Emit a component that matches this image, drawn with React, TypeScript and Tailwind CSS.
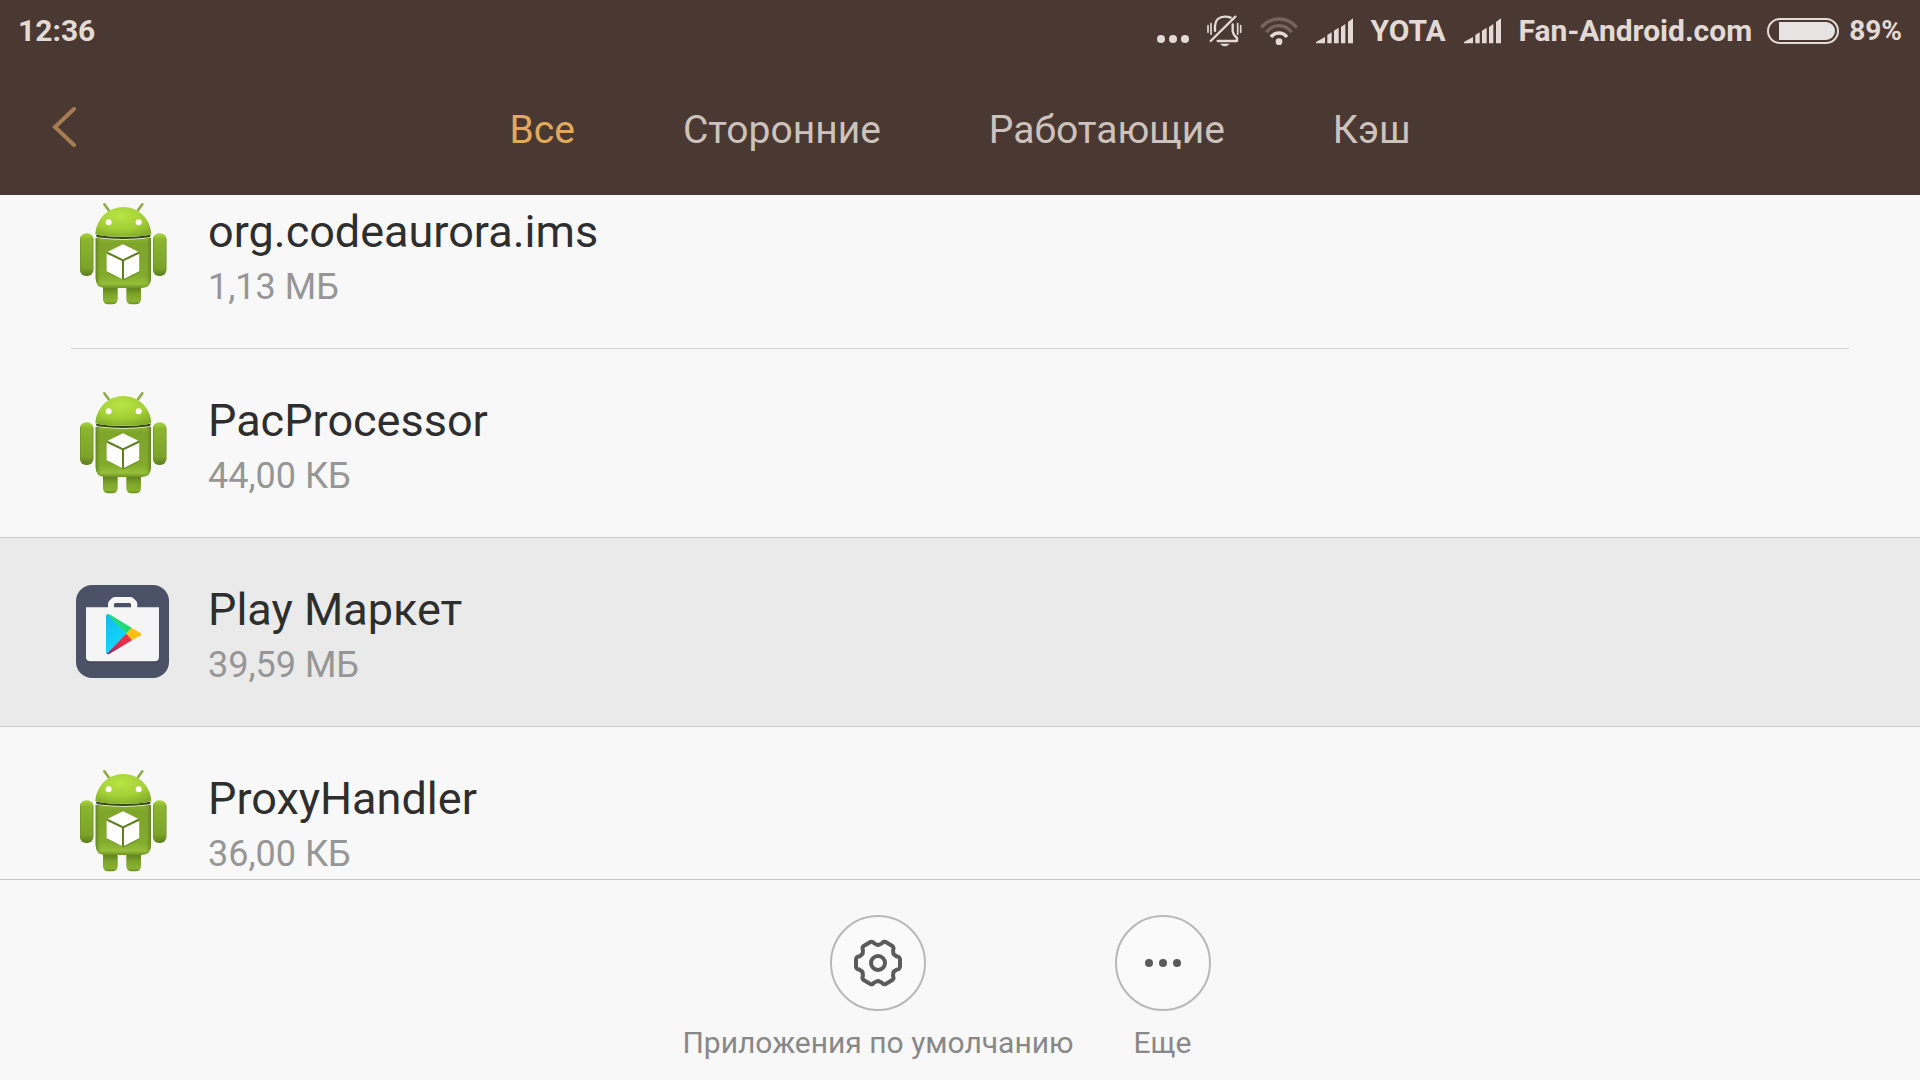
import { useState } from 'react'
import type { ReactNode } from 'react'

interface AppEntry {
  name: string
  size: string
  icon: 'robot' | 'play'
}

const apps: AppEntry[] = [
  { name: 'org.codeaurora.ims', size: '1,13 МБ', icon: 'robot' },
  { name: 'PacProcessor', size: '44,00 КБ', icon: 'robot' },
  { name: 'Play Маркет', size: '39,59 МБ', icon: 'play' },
  { name: 'ProxyHandler', size: '36,00 КБ', icon: 'robot' },
]

const tabs = ['Все', 'Сторонние', 'Работающие', 'Кэш']

// six rounded lobes, one every 60 degrees
function gearPath() {
  const at = (deg: number, r: number) => {
    const a = (deg * Math.PI) / 180
    return `${(r * Math.cos(a)).toFixed(2)} ${(r * Math.sin(a)).toFixed(2)}`
  }
  let d = `M${at(-16, 65)}`
  for (let k = 0; k < 360; k += 60) {
    d += `Q${at(k - 13, 67)} ${at(k - 10, 67)}`
    d += `Q${at(k, 66)} ${at(k + 10, 67)}`
    d += `Q${at(k + 14, 67)} ${at(k + 17, 64)}`
    d += `Q${at(k + 19, 58)} ${at(k + 25, 56)}`
    d += `Q${at(k + 30, 52)} ${at(k + 35, 56)}`
    d += `Q${at(k + 41, 58)} ${at(k + 44, 65)}`
  }
  return d + 'Z'
}

function RobotIcon() {
  return (
    <svg width="88" height="104" viewBox="57 63 264 312" aria-hidden="true">
      <defs>
        <radialGradient id="head" cx="0.45" cy="0.3" r="0.75">
          <stop offset="0" stopColor="#b9e444" />
          <stop offset="0.6" stopColor="#a3cf36" />
          <stop offset="1" stopColor="#83ac2b" />
        </radialGradient>
        <linearGradient id="body" x1="0" y1="0" x2="0" y2="1">
          <stop offset="0" stopColor="#8db52f" />
          <stop offset="0.12" stopColor="#7ea42a" />
          <stop offset="0.75" stopColor="#83ab2b" />
          <stop offset="0.92" stopColor="#96bf3a" />
          <stop offset="1" stopColor="#6d9024" />
        </linearGradient>
        <linearGradient id="side" x1="0" y1="0" x2="1" y2="0">
          <stop offset="0" stopColor="#55761a" stopOpacity="0.75" />
          <stop offset="0.12" stopColor="#8fb832" stopOpacity="0" />
          <stop offset="0.88" stopColor="#8fb832" stopOpacity="0" />
          <stop offset="1" stopColor="#55761a" stopOpacity="0.75" />
        </linearGradient>
        <linearGradient id="arm" x1="0" y1="0" x2="0" y2="1">
          <stop offset="0" stopColor="#a9d53d" />
          <stop offset="0.15" stopColor="#8bb52f" />
          <stop offset="0.8" stopColor="#7da32a" />
          <stop offset="1" stopColor="#5c7d1d" />
        </linearGradient>
        <linearGradient id="leg" x1="0" y1="0" x2="0" y2="1">
          <stop offset="0" stopColor="#55761a" />
          <stop offset="0.5" stopColor="#7da52a" />
          <stop offset="0.85" stopColor="#89b132" />
          <stop offset="1" stopColor="#64861f" />
        </linearGradient>
      </defs>
      <path d="M133 70l13 18M247 70l-13 18" stroke="#8fac4a" strokeWidth="8" strokeLinecap="round" />
      <path d="M129 312h44v42q0 16-17 16h-10q-17 0-17-16zM199 312h44v42q0 16-17 16h-10q-17 0-17-16z" fill="url(#leg)" />
      <rect x="60" y="157" width="40" height="128" rx="18" fill="url(#arm)" />
      <rect x="60" y="157" width="40" height="128" rx="18" fill="url(#side)" />
      <rect x="279" y="157" width="40" height="128" rx="18" fill="url(#arm)" />
      <rect x="279" y="157" width="40" height="128" rx="18" fill="url(#side)" />
      <path d="M107 170q83 12 166 0v122q0 29-29 29H136q-29 0-29-29z" fill="url(#body)" />
      <path d="M107 170q83 12 166 0v122q0 29-29 29H136q-29 0-29-29z" fill="url(#side)" />
      <path d="M107 161q83 14 166 0l-4 8q-79 10-158 0z" fill="#33470f" />
      <path d="M106 158c4-46 39-80 84-80s80 34 84 80q-10 9-84 9t-84-9z" fill="url(#head)" />
      <circle cx="146" cy="124" r="9" fill="#fff" />
      <circle cx="236" cy="124" r="9" fill="#fff" />
      <path d="M190 194l49 22v57l-48 25-49-25v-57z" fill="#4d6a17" opacity="0.65" />
      <path d="M189 190l46 22-46 23-46-23z" fill="#fff" />
      <path d="M140 218l46 22v54l-46-23zM238 218l-46 22v54l46-23z" fill="#fff" />
    </svg>
  )
}

function PlayIcon() {
  return (
    <svg width="94" height="94" viewBox="48 74 282 282" aria-hidden="true">
      <defs>
        <linearGradient id="blue" x1="0" y1="0" x2="0.4" y2="1">
          <stop offset="0" stopColor="#15b9e6" />
          <stop offset="1" stopColor="#0fdcff" />
        </linearGradient>
        <linearGradient id="red" x1="1" y1="0" x2="0" y2="1">
          <stop offset="0" stopColor="#f5334a" />
          <stop offset="0.5" stopColor="#de2f4a" />
          <stop offset="1" stopColor="#8d2a72" />
        </linearGradient>
      </defs>
      <rect x="48" y="74" width="279" height="279" rx="48" fill="#4b5267" />
      <path d="M78 150h220v145q0 13-13 13H91q-13 0-13-13z" fill="#3a4053" opacity="0.6" />
      <path
        fillRule="evenodd"
        d="M78 141h66v-10q0-6 4-10l6-6q4-5 10-5h48q6 0 10 5l6 6q4 4 4 10v10h65v149q0 13-13 13H91q-13 0-13-13zM162 141h51v-9l-3-4h-45l-3 4z"
        fill="#f5f5f6"
      />
      <path d="M138 167q0-6 6-5l56 58-56 61q-6 2-6-5z" fill="url(#blue)" />
      <path d="M142 162q3-2 6 0l67 40-16 18z" fill="#1fdc78" />
      <path d="M214 202l27 15q6 4 0 9l-26 14-17-20z" fill="#fdbf13" />
      <path d="M199 220l17 20-68 41q-4 2-7-1z" fill="url(#red)" />
    </svg>
  )
}

function SignalIcon() {
  return (
    <svg width="37" height="26" viewBox="0 0 111 78" fill="#e3dad6" aria-hidden="true">
      <path d="M0 76v-4l27-15v19zM34 76V51l13-8v33zM54 76V38l14-9v47zM75 76V27l13-9v58zM96 76V12l15-11v75z" />
    </svg>
  )
}

function MutedBellIcon() {
  return (
    <svg
      width="35"
      height="32"
      viewBox="0 0 105 96"
      fill="none"
      stroke="#e3dad6"
      strokeWidth="7"
      strokeLinecap="round"
      strokeLinejoin="round"
      aria-hidden="true"
    >
      <path d="M71 8Q64 5 54 5C36 5 25 16 24 32v16" />
      <path d="M77 28v20q1 11 13 21v9H32" />
      <path d="M85 5L11 78" />
      <path d="M39 86h29q-15 16-29 0z" fill="#e3dad6" stroke="none" />
      <path d="M3 32v20M12 26v32M92 26v32M101 32v20" strokeWidth="5" />
    </svg>
  )
}

function WifiIcon() {
  return (
    <svg width="38" height="28" viewBox="0 0 114 84" fill="none" strokeWidth="10" aria-hidden="true">
      <path d="M4 31Q25 6 57 6t53 25" stroke="#75635c" />
      <path d="M19 46Q34 26 57 26t38 20" stroke="#75635c" />
      <path d="M33 60Q42 48 57 48t24 12" stroke="#e3dad6" />
      <circle cx="57" cy="74" r="10" fill="#e3dad6" />
    </svg>
  )
}

function BatteryIcon() {
  return (
    <svg width="72" height="26" viewBox="0 0 72 26" aria-hidden="true">
      <rect x="1" y="1" width="70" height="24" rx="12" fill="none" stroke="#e3dad6" strokeWidth="2" />
      <path d="M12 4h47a9 9 0 0 1 0 18H12z" fill="#e6e3e2" />
    </svg>
  )
}

function StatusBar() {
  return (
    <div className="flex h-[62px] items-center justify-between px-[18px] text-[30px] font-bold leading-[36px] text-[#e3dad6]">
      <span>12:36</span>
      <div className="flex items-center gap-[18px]">
        <svg width="32" height="26" viewBox="0 0 32 26" fill="#e3dad6" aria-hidden="true">
          <circle cx="4" cy="21" r="4" />
          <circle cx="16" cy="21" r="4" />
          <circle cx="28" cy="21" r="4" />
        </svg>
        <MutedBellIcon />
        <WifiIcon />
        <SignalIcon />
        <span>YOTA</span>
        <SignalIcon />
        <div className="flex items-center gap-[15px]">
          <span>Fan-Android.com</span>
          <BatteryIcon />
        </div>
        <span className="-ml-2 text-[28px]">89%</span>
      </div>
    </div>
  )
}

function ToolButton({ label, children }: { label: string; children: ReactNode }) {
  return (
    <button type="button" className="flex min-w-[150px] flex-col items-center">
      <span className="flex h-24 w-24 items-center justify-center rounded-full border-2 border-[#b8b8b8] bg-[#fafafa]">
        {children}
      </span>
      <span className="mt-4 text-[30px] leading-[32px] text-[#888888]">{label}</span>
    </button>
  )
}

export default function App() {
  const [activeTab, setActiveTab] = useState('Все')
  const [selected, setSelected] = useState('Play Маркет')

  return (
    <div className="flex h-screen flex-col overflow-hidden bg-[#f8f8f8] font-[Roboto,sans-serif]">
      <header className="shrink-0 bg-[#4a3932]">
        <StatusBar />
        <nav className="grid h-[133px] grid-cols-[1fr_auto_1fr] items-center">
          <button type="button" aria-label="Назад" className="ml-[51px] w-8">
            <svg width="28" height="44" viewBox="0 0 28 44" fill="none" stroke="#a67c52" strokeWidth="4" strokeLinecap="round">
              <path d="M23 2L4 20l19 18" />
            </svg>
          </button>
          <div className="flex gap-[108px] pt-0.5 text-[39px] leading-[48px]">
            {tabs.map(tab => (
              <button
                key={tab}
                type="button"
                onClick={() => setActiveTab(tab)}
                className={tab === activeTab ? 'text-[#e0aa5c]' : 'text-[#cdc2bc]'}
              >
                {tab}
              </button>
            ))}
          </div>
        </nav>
      </header>

      <main className="min-h-0 flex-1 overflow-hidden">
        {/* the list is scrolled a little, so the first row starts under the header */}
        <ul className="-mt-[35px]">
          {apps.map((app, i) => {
            const active = app.name === selected
            const edge = active || apps[i + 1]?.name === selected
            return (
              <li key={app.name} className={active ? 'bg-[#eaeaea]' : ''}>
                <button
                  type="button"
                  onClick={() => setSelected(app.name)}
                  className="flex h-[188px] w-full items-center gap-[33px] px-[71px] text-left"
                >
                  <span className="flex w-[104px] shrink-0 justify-center">
                    {app.icon === 'robot' ? <RobotIcon /> : <PlayIcon />}
                  </span>
                  <span className="flex flex-col">
                    <span className="text-[45px] leading-[66px] text-[#2e2e2e]">{app.name}</span>
                    <span className="text-[36px] leading-[44px] text-[#969696]">{app.size}</span>
                  </span>
                </button>
                <div className={edge ? 'h-px bg-[#cccccc]' : 'mx-[71px] h-px bg-[#d0d0d0]'} />
              </li>
            )
          })}
        </ul>
      </main>

      <footer className="flex h-[201px] shrink-0 items-start justify-center gap-[14px] border-t border-[#c8c8c8] pt-[35px]">
        <ToolButton label="Приложения по умолчанию">
          <svg width="50" height="50" viewBox="-75 -75 150 150" fill="none" stroke="#5a5a5a" strokeWidth="12" aria-hidden="true">
            <path d={gearPath()} strokeLinejoin="round" />
            <circle r="21" />
          </svg>
        </ToolButton>
        <ToolButton label="Еще">
          <svg width="36" height="8" viewBox="0 0 36 8" fill="#5a5a5a" aria-hidden="true">
            <circle cx="4" cy="4" r="4" />
            <circle cx="18" cy="4" r="4" />
            <circle cx="32" cy="4" r="4" />
          </svg>
        </ToolButton>
      </footer>
    </div>
  )
}
